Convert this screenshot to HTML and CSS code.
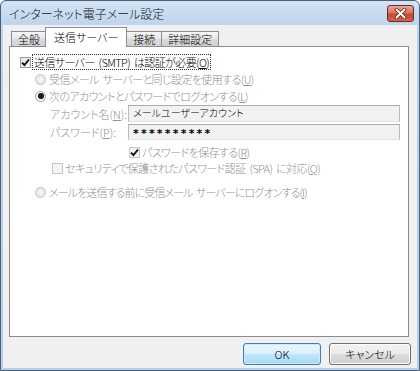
FILE: index.html
```html
<!DOCTYPE html>
<html lang="ja">
<head>
    <meta charset="UTF-8">
    <title>インターネット電子メール設定</title>
    <link rel="stylesheet" href="styles.css">
</head>
<body>
    <div class="window">
        <div class="titlebar">
            <span class="title">インターネット電子メール設定</span>
            <div class="close">
                <svg width="13" height="11" viewBox="0 0 13 11">
                    <path d="M2.5 1.5 L10.5 9.5 M10.5 1.5 L2.5 9.5" stroke="#6b3028" stroke-width="3.6" stroke-linecap="round"/>
                    <path d="M2.5 1.5 L10.5 9.5 M10.5 1.5 L2.5 9.5" stroke="#fff" stroke-width="1.8" stroke-linecap="round"/>
                </svg>
            </div>
        </div>

        <div class="client">
            <div class="tabs">
                <div class="tab">全般</div>
                <div class="tab active">送信サーバー</div>
                <div class="tab">接続</div>
                <div class="tab">詳細設定</div>
            </div>

            <div class="panel">
                <!-- 認証 -->
                <div class="row row-auth">
                    <span class="check"><svg width="9" height="9" viewBox="0 0 9 9"><path d="M1 4.6 L3.4 7 L8 1.5" fill="none" stroke="#111" stroke-width="1.9"/></svg></span>
                    <span class="label focus">送信サーバー (SMTP) は認証が必要(<u>O</u>)</span>
                </div>
                <div class="row row-radio off">
                    <span class="radio"></span>
                    <span class="label">受信メール サーバーと同じ設定を使用する(<u>U</u>)</span>
                </div>
                <div class="row row-radio off">
                    <span class="radio selected"><span class="dot"></span></span>
                    <span class="label">次のアカウントとパスワードでログオンする(<u>L</u>)</span>
                </div>

                <div class="row row-field off">
                    <span class="field-label">アカウント名(<u>N</u>):</span>
                    <div class="input">メールユーザーアカウント</div>
                </div>
                <div class="row row-field row-pass off">
                    <span class="field-label">パスワード(<u>P</u>):</span>
                    <div class="input password">**********</div>
                </div>

                <div class="row row-save off">
                    <span class="check"><svg width="9" height="9" viewBox="0 0 9 9"><path d="M1 4.6 L3.4 7 L8 1.5" fill="none" stroke="#111" stroke-width="1.9"/></svg></span>
                    <span class="label">パスワードを保存する(<u>R</u>)</span>
                </div>
                <div class="row row-spa off">
                    <span class="check"></span>
                    <span class="label">セキュリティで保護されたパスワード認証 (SPA) に対応(<u>Q</u>)</span>
                </div>

                <div class="row row-radio row-last off">
                    <span class="radio"></span>
                    <span class="label">メールを送信する前に受信メール サーバーにログオンする(<u>I</u>)</span>
                </div>
            </div>

            <div class="buttons">
                <button class="btn default">OK</button>
                <button class="btn">キャンセル</button>
            </div>
        </div>
    </div>
</body>
</html>
```

FILE: styles.css
```css
body {
    margin: 0;
    font-family: "Noto Sans CJK JP", "Noto Sans", sans-serif;
    font-size: 11px;
    font-weight: 300;
    font-feature-settings: "palt";
    color: #000;
    background: #fff;
}
.window {
    width: 420px;
    height: 371px;
    box-sizing: border-box;
    border: 1px solid #4a5f78;
    border-radius: 6px 6px 0 0;
    background: linear-gradient(#d3e3f4, #bed4eb 24px, #b7cfe9);
    padding: 0 2px 2px 2px;
    display: flex;
    flex-direction: column;
}
.titlebar {
    height: 24px;
    display: flex;
    align-items: center;
    justify-content: space-between;
    padding: 0 3px 0 6px;
}
.title {
    font-size: 12px;
    color: #111;
    padding-top: 1px;
}
.close {
    width: 27px;
    height: 17px;
    box-sizing: border-box;
    margin-top: 1px;
    border: 1px solid #6a2a22;
    border-radius: 3px;
    background: linear-gradient(#e9a99a, #d5725e 45%, #c44a32 55%, #d0664a);
    display: flex;
    align-items: center;
    justify-content: center;
}
.client {
    flex: 1;
    background: #f0f0f0;
    padding: 2px 6px 3px 6px;
    display: flex;
    flex-direction: column;
}

/* タブ */
.tabs {
    height: 20px;
    display: flex;
    align-items: flex-end;
    padding-left: 2px;
}
.tab {
    height: 15px;
    box-sizing: border-box;
    margin-bottom: 1px;
    padding: 0 6px;
    border: 1px solid #898c95;
    border-bottom: none;
    background: linear-gradient(#f6f6f6, #e6e6e6 50%, #dadada 51%, #d2d2d2);
    line-height: 14px;
    margin-right: -1px;
}
.tab.active {
    height: 20px;
    margin: 0 -1px 0 -1px;
    padding: 0 8px;
    background: #fff;
    line-height: 18px;
    position: relative;
    z-index: 1;
}
.panel {
    flex: 1;
    margin: -1px 2px 0 0;
    border: 1px solid #898c95;
    background: #fff;
    padding-top: 7px;
}

/* 行 */
.row {
    display: flex;
    align-items: center;
    height: 16px;
    white-space: nowrap;
}
.off {
    color: #8f8f8f;
}
.label {
    line-height: 14px;
    letter-spacing: -0.6px;
    word-spacing: 2px;
}
.row-last .label {
    letter-spacing: -0.9px;
}
.focus {
    outline: 1px dotted #333;
    outline-offset: 0;
    padding: 0 1px;
}
.check {
    width: 11px;
    height: 11px;
    box-sizing: border-box;
    border: 1px solid #9e9e9e;
    background: linear-gradient(135deg, #e2e2e2, #fafafa);
    display: flex;
    align-items: center;
    justify-content: center;
    margin-right: 2px;
}
.off .check {
    border-color: #c6c6c6;
    background: #f4f4f4;
}
.radio {
    width: 11px;
    height: 11px;
    box-sizing: border-box;
    border: 1px solid #c2c2c2;
    border-radius: 50%;
    background: radial-gradient(#f8f8f8, #e0e0e0);
    display: flex;
    align-items: center;
    justify-content: center;
    margin-right: 3px;
}
.radio.selected {
    border-color: #a9a9a9;
    background: #f0f0f0;
}
.dot {
    width: 6px;
    height: 6px;
    border-radius: 50%;
    background: #1a1a1a;
}
.row-auth {
    padding-left: 10px;
}
.row-radio {
    padding-left: 25px;
    margin-top: 1px;
}
.row-field {
    padding-left: 40px;
    height: 17px;
    margin-top: 1px;
}
.row-pass {
    height: 16px;
    margin-top: 2px;
}
.field-label {
    width: 78px;
    line-height: 14px;
}
.input {
    width: 272px;
    height: 100%;
    box-sizing: border-box;
    border: 1px solid #b5bcc7;
    border-top-color: #abadb3;
    border-bottom-color: #dfe3ea;
    background: #f2f2f2;
    color: #000;
    font-size: 10px;
    padding-left: 4px;
    line-height: 14px;
}
.input.password {
    font-family: "DejaVu Sans", sans-serif;
    font-weight: bold;
    font-size: 11px;
    letter-spacing: 2.2px;
    line-height: 18px;
}
.row-save {
    padding-left: 119px;
    margin-top: 4px;
}
.row-spa {
    padding-left: 42px;
}
.row-last {
    margin-top: 8px;
}

/* ボタン */
.buttons {
    display: flex;
    justify-content: flex-end;
    gap: 8px;
    margin-top: 6px;
}
.btn {
    height: 22px;
    font-family: inherit;
    font-size: 11px;
    font-weight: 300;
    font-feature-settings: "palt";
    border: 1px solid #707070;
    border-radius: 3px;
    background: linear-gradient(#f2f2f2, #ebebeb 50%, #dddddd 51%, #cfcfcf);
    box-shadow: inset 0 0 0 1px #fbfbfb;
    padding: 0;
    width: 82px;
}
.btn.default {
    width: 78px;
    border-color: #3c7fb1;
    background: linear-gradient(#eaf6fd, #d9f0fc 50%, #bee6fd 51%, #a7d9f5);
    box-shadow: inset 0 0 0 1px #cdeafa;
}
```
